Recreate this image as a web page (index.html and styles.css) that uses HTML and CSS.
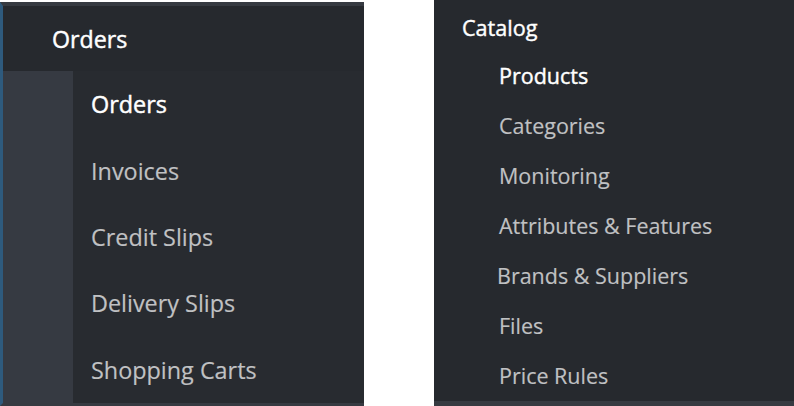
FILE: index.html
```html
<!DOCTYPE html>
<html lang="en">
<head>
<meta charset="utf-8">
<title>Menus</title>
<link rel="stylesheet" href="styles.css">
</head>
<body>
<div class="page">
  <nav class="panel panel-orders">
    <div class="orders-head">Orders</div>
    <div class="orders-body">
      <div class="orders-gutter"></div>
      <ul class="orders-list">
        <li class="orders-item active">Orders</li>
        <li class="orders-item">Invoices</li>
        <li class="orders-item">Credit Slips</li>
        <li class="orders-item">Delivery Slips</li>
        <li class="orders-item">Shopping Carts</li>
      </ul>
    </div>
  </nav>
  <nav class="panel panel-catalog">
    <div class="catalog-head">Catalog</div>
    <ul class="catalog-list">
      <li class="catalog-item active">Products</li>
      <li class="catalog-item">Categories</li>
      <li class="catalog-item">Monitoring</li>
      <li class="catalog-item">Attributes &amp; Features</li>
      <li class="catalog-item shifted">Brands &amp; Suppliers</li>
      <li class="catalog-item">Files</li>
      <li class="catalog-item">Price Rules</li>
    </ul>
  </nav>
</div>
</body>
</html>
```

FILE: styles.css
```css
* { box-sizing: border-box; }
html, body {
  margin: 0;
  padding: 0;
  background: #ffffff;
  font-family: "Open Sans", "Noto Sans", sans-serif;
}
ul { list-style: none; margin: 0; padding: 0; }

.page {
  display: flex;
  gap: 70px;
  width: 794px;
  height: 406px;
  overflow: hidden;
}

.panel {
  background: #26292e;
  display: flex;
  flex-direction: column;
}

/* Left: Orders */
.panel-orders {
  width: 364px;
  margin-top: 2px;
  border-top: 4px solid #363a41;
  border-left: 3px solid #2e5a7d;
  border-bottom: 3px solid #363a41;
}
.orders-head {
  height: 65px;
  display: flex;
  align-items: center;
  padding-left: 49px;
  color: #ffffff;
  font-size: 23.2px;
  font-weight: 400;
  -webkit-text-stroke: 0.45px #ffffff;
}
.orders-body {
  flex: 1;
  display: flex;
  background: #282b30;
}
.orders-gutter {
  width: 70px;
  background: #363a42;
}
.orders-list {
  flex: 1;
  display: flex;
  flex-direction: column;
}
.orders-item {
  flex: 1;
  display: flex;
  align-items: center;
  padding-left: 18px;
  color: #c0c1c3;
  font-size: 23.4px;
  font-weight: 400;
  -webkit-text-stroke: 0.15px #c0c1c3;
}
.orders-item.active {
  color: #ffffff;
  font-size: 23.4px;
  -webkit-text-stroke: 0.45px #ffffff;
}

/* Right: Catalog */
.panel-catalog {
  width: 360px;
  border-bottom: 5px solid #363a41;
}
.catalog-head {
  height: 50px;
  display: flex;
  align-items: center;
  padding-left: 28px;
  padding-top: 4px;
  color: #ffffff;
  font-size: 21.6px;
  font-weight: 400;
  -webkit-text-stroke: 0.4px #ffffff;
}
.catalog-list {
  flex: 1;
  display: flex;
  flex-direction: column;
}
.catalog-item {
  flex: 1;
  display: flex;
  align-items: center;
  padding-left: 65px;
  color: #c0c1c3;
  font-size: 21.5px;
  font-weight: 400;
  -webkit-text-stroke: 0.15px #c0c1c3;
}
.catalog-item.active {
  color: #ffffff;
  font-size: 21.5px;
  -webkit-text-stroke: 0.4px #ffffff;
}
.catalog-item.shifted { padding-left: 63px; }
```
